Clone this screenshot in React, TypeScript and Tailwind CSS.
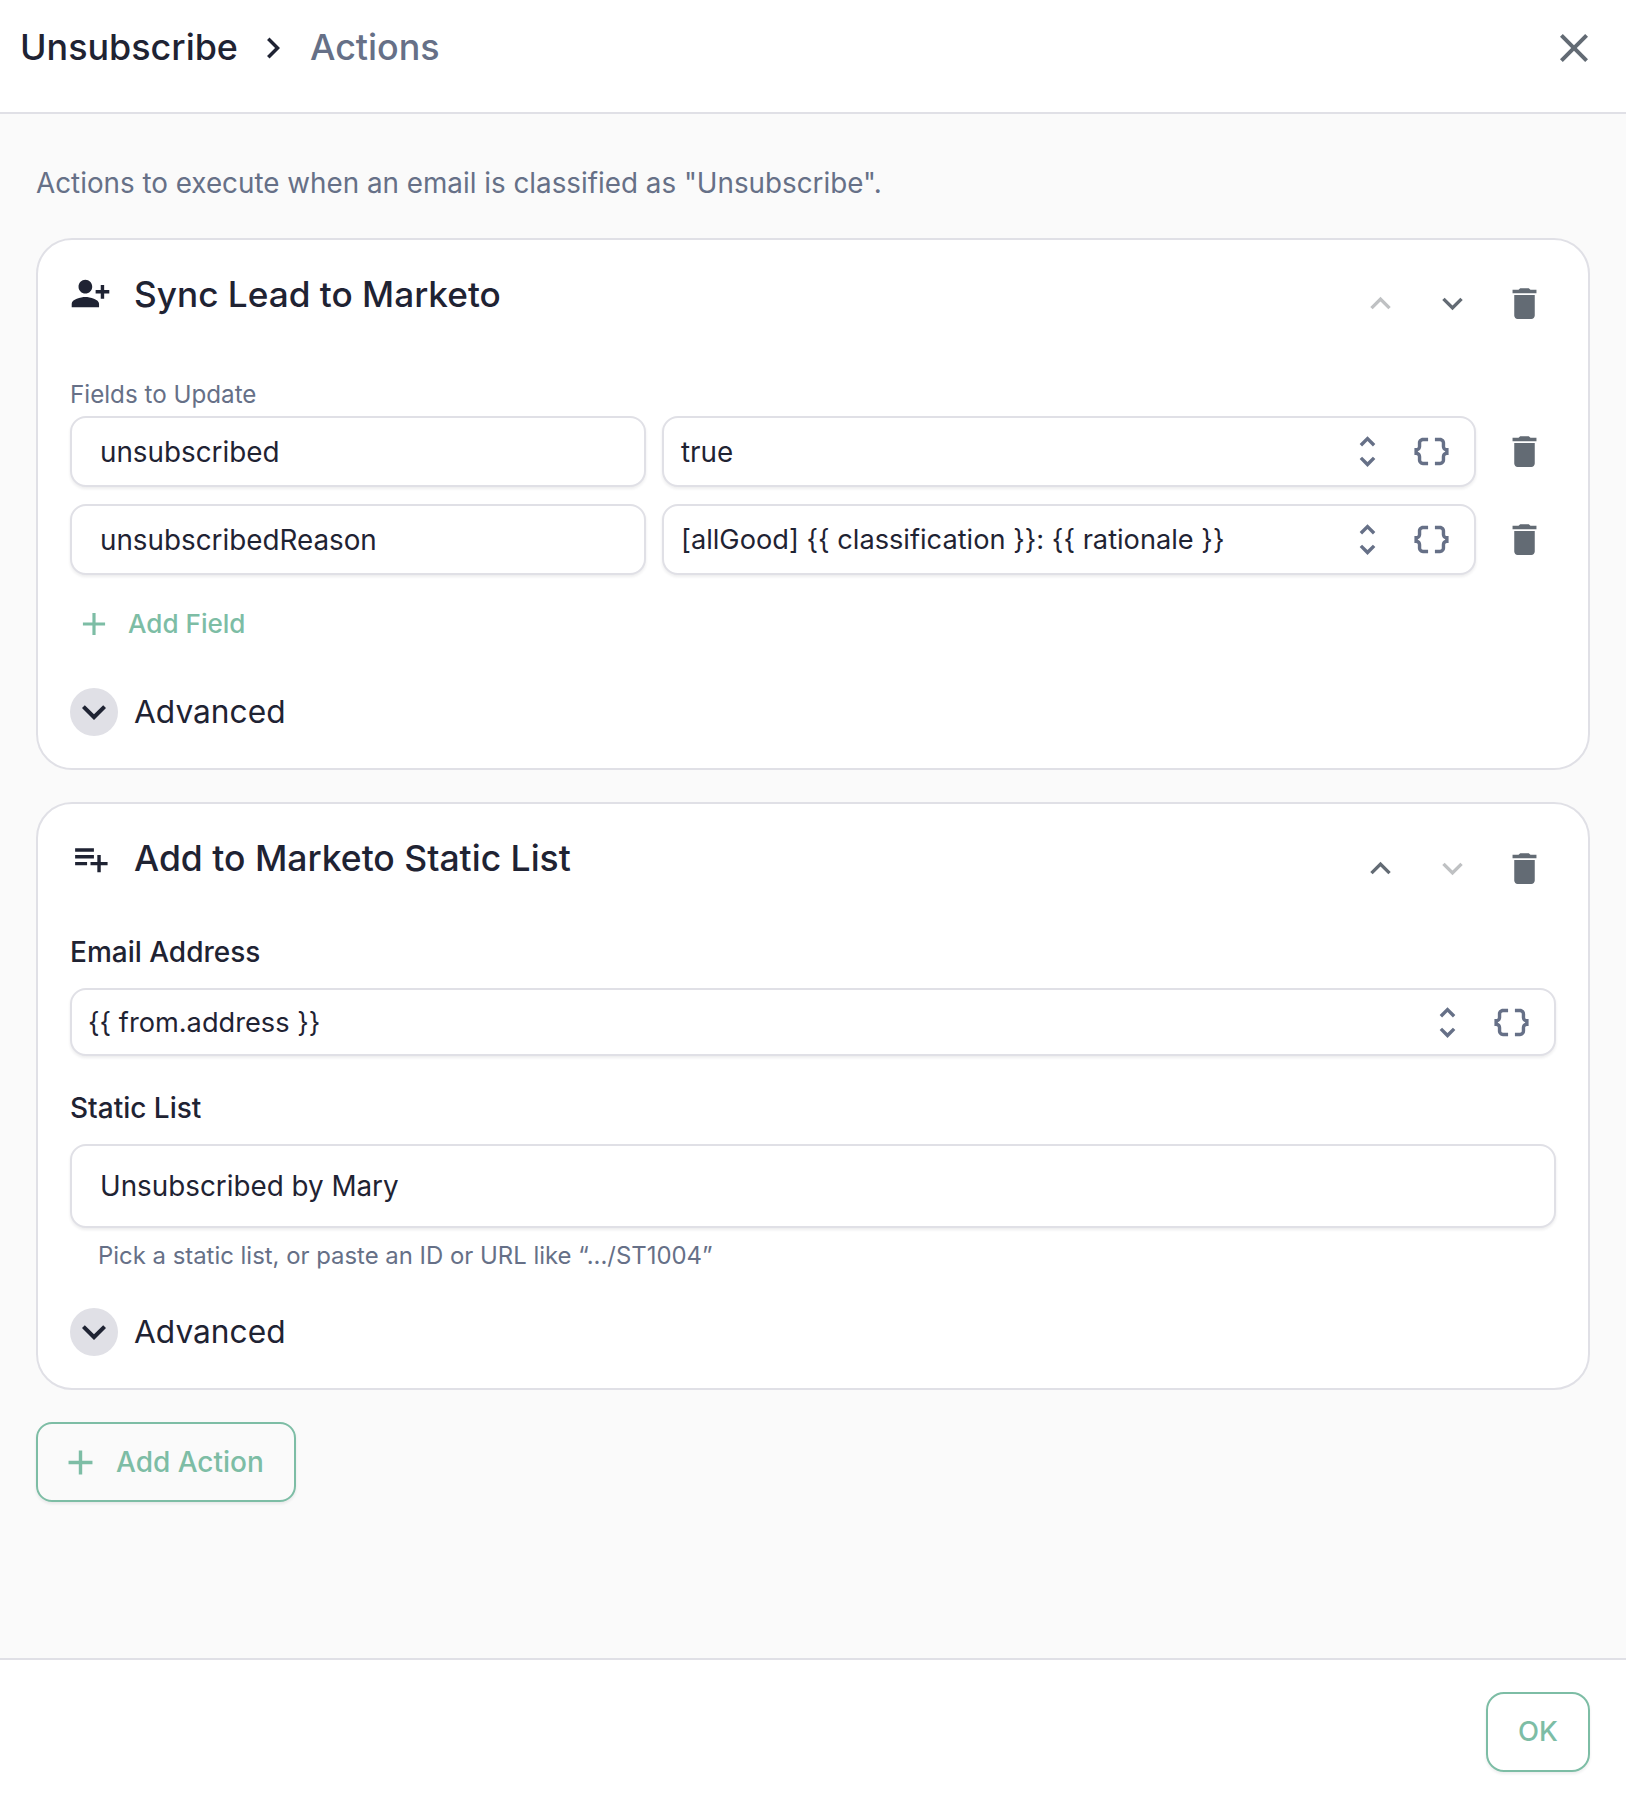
import React from 'react';

const paths = {
  close: 'M19 6.41 17.59 5 12 10.59 6.41 5 5 6.41 10.59 12 5 17.59 6.41 19 12 13.41 17.59 19 19 17.59 13.41 12z',
  right: 'M10 6 8.59 7.41 13.17 12l-4.58 4.59L10 18l6-6z',
  up: 'M7.41 15.41 12 10.83l4.59 4.58L18 14l-6-6-6 6z',
  down: 'M7.41 8.59 12 13.17l4.59-4.58L18 10l-6 6-6-6 1.41-1.41z',
  trash: 'M6 19c0 1.1.9 2 2 2h8c1.1 0 2-.9 2-2V7H6v12zM19 4h-3.5l-1-1h-5l-1 1H5v2h14V4z',
  unfold: 'M12 5.83 15.17 9l1.41-1.41L12 3 7.41 7.59 8.83 9 12 5.83zm0 12.34L8.83 15l-1.41 1.41L12 21l4.59-4.59L15.17 15 12 18.17z',
  braces:
    'M4 7v2c0 .55-.45 1-1 1H2v4h1c.55 0 1 .45 1 1v2c0 1.65 1.35 3 3 3h3v-2H7c-.55 0-1-.45-1-1v-2c0-1.3-.84-2.42-2-2.83v-.34C5.16 11.42 6 10.3 6 9V7c0-.55.45-1 1-1h3V4H7C5.35 4 4 5.35 4 7zm17 3c-.55 0-1-.45-1-1V7c0-1.65-1.35-3-3-3h-3v2h3c.55 0 1 .45 1 1v2c0 1.3.84 2.42 2 2.83v.34c-1.16.41-2 1.52-2 2.83v2c0 .55-.45 1-1 1h-3v2h3c1.65 0 3-1.35 3-3v-2c0-.55.45-1 1-1h1v-4h-1z',
  person: 'M15 12c2.21 0 4-1.79 4-4s-1.79-4-4-4-4 1.79-4 4 1.79 4 4 4zm-9-2V7H4v3H1v2h3v3h2v-3h3v-2H6zm9 4c-2.67 0-8 1.34-8 4v2h16v-2c0-2.66-5.33-4-8-4z',
  playlist: 'M14 10H3v2h11v-2zm0-4H3v2h11V6zm4 8v-4h-2v4h-4v2h4v4h2v-4h4v-2h-4zM3 16h7v-2H3v2z',
  plus: 'M19 13h-6v6h-2v-6H5v-2h6V5h2v6h6v2z',
};

const Icon: React.FC<{ d: string; className: string }> = ({ d, className }) => (
  <svg viewBox="0 0 24 24" fill="currentColor" className={`shrink-0 ${className}`}>
    <path d={d} />
  </svg>
);

const MoveButtons: React.FC<{ upOff?: boolean; downOff?: boolean }> = ({ upOff, downOff }) => (
  <div className="flex items-center mt-[15px] mr-[11px] gap-[31px]">
    <Icon d={paths.up} className={`w-[41px] h-[41px] ${upOff ? 'text-[#bfc1c3]' : 'text-[#636b74]'}`} />
    <Icon d={paths.down} className={`w-[41px] h-[41px] ${downOff ? 'text-[#bfc1c3]' : 'text-[#636b74]'}`} />
    <Icon d={paths.trash} className="w-[41px] h-[41px] text-[#636b74]" />
  </div>
);

const VarIcons = () => (
  <div className="flex items-center gap-[23px] text-[#667087]">
    <Icon d={paths.unfold} className="w-[41px] h-[41px]" />
    <Icon d={paths.braces} className="w-[41px] h-[41px]" />
  </div>
);

const inputBox = 'bg-white border-2 border-[#e0e0e6] rounded-[16px] shadow-[0_2px_3px_rgba(20,20,40,0.08)] flex items-center';

const FieldRow: React.FC<{ name: string; value: string; small?: boolean }> = ({ name, value, small }) => (
  <div className="flex h-[71px]">
    <div className={`${inputBox} w-[576px] pl-[28px]`}>
      <span className="mt-[2px]">{name}</span>
    </div>
    <div className={`${inputBox} flex-1 ml-[16px] pl-[17px] pr-[22px] justify-between`}>
      <span className={small ? 'mt-[2px] text-[27.2px]' : 'mt-[2px]'}>{value}</span>
      <VarIcons />
    </div>
    <div className="w-[80px] flex items-center justify-end pr-[11px]">
      <Icon d={paths.trash} className="w-[41px] h-[41px] text-[#636b74]" />
    </div>
  </div>
);

const Advanced = () => (
  <div className="flex items-center h-[48px] gap-[16px]">
    <div className="w-[48px] h-[48px] rounded-full bg-[#e0e0e6] flex items-center justify-center">
      <Icon d={paths.down} className="w-[48px] h-[48px] text-[#1f2333]" />
    </div>
    <span className="text-[31.7px]">Advanced</span>
  </div>
);

export default function App() {
  return (
    <div className="w-[1626px] h-[1794px] flex flex-col bg-[#fafafa] text-[#1f2333] text-[27.8px] font-['Inter',sans-serif]">
      <header className="h-[114px] shrink-0 bg-white border-b-2 border-[#e0e0e6] flex items-center justify-between pl-[20px] pr-[28px] pb-[16px]">
        <div className="flex items-center text-[35.9px] font-medium">
          <span>Unsubscribe</span>
          <Icon d={paths.right} className="w-[42px] h-[42px] ml-[14px] mr-[16px] text-[#1f2333]" />
          <span className="text-[#667087]">Actions</span>
        </div>
        <Icon d={paths.close} className="w-[48px] h-[48px] text-[#636b74]" />
      </header>

      <main className="flex-1 px-[36px] pt-[48px]">
        <p className="h-[42px] leading-[43px] text-[#667087] mb-[34px]">
          Actions to execute when an email is classified as "Unsubscribe".
        </p>

        <section className="bg-white border-2 border-[#e0e0e6] rounded-[36px] px-[32px] pt-[28px] pb-[32px]">
          <div className="flex items-start justify-between">
            <div className="flex items-center h-[50px]">
              <Icon d={paths.person} className="w-[41px] h-[41px] -scale-x-100 mr-[23px]" />
              <h2 className="mt-[2px] text-[35.2px] font-medium">Sync Lead to Marketo</h2>
            </div>
            <MoveButtons upOff />
          </div>

          <div className="mt-[57px] h-[28px] leading-[28px] text-[24.2px] text-[#667087] mb-[7px]">Fields to Update</div>
          <div className="flex flex-col gap-[17px]">
            <FieldRow name="unsubscribed" value="true" />
            <FieldRow name="unsubscribedReason" value="[allGood] {{ classification }}: {{ rationale }}" small />
          </div>

          <div className="flex items-center h-[40px] mt-[29px] text-[#7dbda5]">
            <Icon d={paths.plus} className="w-[38px] h-[38px] ml-[5px] mr-[15px]" />
            <span className="font-medium text-[26.1px]">Add Field</span>
          </div>

          <div className="mt-[44px]">
            <Advanced />
          </div>
        </section>

        <section className="mt-[32px] bg-white border-2 border-[#e0e0e6] rounded-[36px] px-[32px] pt-[29px] pb-[32px]">
          <div className="flex items-start justify-between">
            <div className="flex items-center h-[50px]">
              <Icon d={paths.playlist} className="w-[41px] h-[41px] mr-[23px]" />
              <h2 className="mt-[2px] text-[35.5px] font-medium">Add to Marketo Static List</h2>
            </div>
            <MoveButtons downOff />
          </div>

          <label className="block mt-[47px] h-[32px] leading-[32px] font-medium text-[28px]">Email Address</label>
          <div className={`${inputBox} mt-[20px] h-[68px] pl-[16px] pr-[22px] justify-between`}>
            <span className="mt-[2px] text-[27.2px]">{'{{ from.address }}'}</span>
            <VarIcons />
          </div>

          <label className="block mt-[36px] h-[32px] leading-[32px] font-medium text-[28px]">Static List</label>
          <div className={`${inputBox} mt-[20px] h-[84px] pl-[28px]`}>
            <span className="mt-[2px]">Unsubscribed by Mary</span>
          </div>
          <div className="mt-[14px] h-[28px] leading-[28px] pl-[28px] text-[23.9px] text-[#667087]">
            Pick a static list, or paste an ID or URL like “.../ST1004”
          </div>

          <div className="mt-[38px]">
            <Advanced />
          </div>
        </section>

        <button className="mt-[32px] w-[260px] h-[80px] border-2 border-[#7dbda5] rounded-[16px] shadow-[0_2px_3px_rgba(20,20,40,0.08)] flex items-center pl-[22px] text-[#7dbda5] font-medium text-[28px]">
          <Icon d={paths.plus} className="w-[41px] h-[41px] mr-[15px]" />
          Add Action
        </button>
      </main>

      <footer className="h-[136px] shrink-0 bg-white border-t-2 border-[#e0e0e6] flex justify-end pt-[32px] pr-[36px]">
        <button className="w-[104px] h-[80px] border-2 border-[#7dbda5] rounded-[18px] shadow-[0_2px_3px_rgba(20,20,40,0.08)] text-[#7dbda5] font-medium text-[27.4px]">
          OK
        </button>
      </footer>
    </div>
  );
}
